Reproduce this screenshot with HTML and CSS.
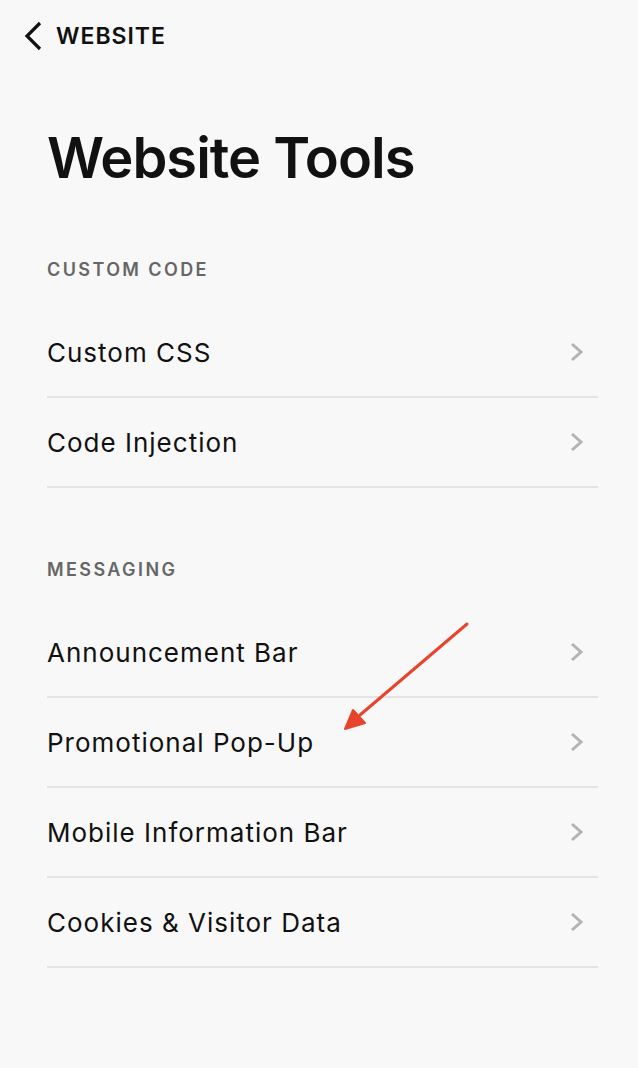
FILE: index.html
```html
<!DOCTYPE html>
<html lang="en">
<head>
<meta charset="utf-8">
<title>Website Tools</title>
<link rel="stylesheet" href="styles.css">
</head>
<body>
<div class="page">
  <nav class="topbar">
    <svg class="back-icon" width="20" height="30" viewBox="0 0 20 30" aria-hidden="true">
      <path d="M17 2 L4 15 L17 28" fill="none" stroke="#111" stroke-width="3.2" stroke-linecap="butt" stroke-linejoin="miter"/>
    </svg>
    <span class="back-label">WEBSITE</span>
  </nav>

  <main class="content">
    <h1 class="title">Website Tools</h1>

    <section class="group">
      <h2 class="group-label">CUSTOM CODE</h2>
      <ul class="list">
        <li class="row"><span>Custom CSS</span><svg class="chev" viewBox="0 0 14 20"><path d="M2 2 L11 10 L2 18"/></svg></li>
        <li class="row"><span>Code Injection</span><svg class="chev" viewBox="0 0 14 20"><path d="M2 2 L11 10 L2 18"/></svg></li>
      </ul>
    </section>

    <section class="group">
      <h2 class="group-label">MESSAGING</h2>
      <ul class="list">
        <li class="row"><span>Announcement Bar</span><svg class="chev" viewBox="0 0 14 20"><path d="M2 2 L11 10 L2 18"/></svg></li>
        <li class="row"><span>Promotional Pop-Up</span><svg class="chev" viewBox="0 0 14 20"><path d="M2 2 L11 10 L2 18"/></svg></li>
        <li class="row"><span>Mobile Information Bar</span><svg class="chev" viewBox="0 0 14 20"><path d="M2 2 L11 10 L2 18"/></svg></li>
        <li class="row"><span>Cookies &amp; Visitor Data</span><svg class="chev" viewBox="0 0 14 20"><path d="M2 2 L11 10 L2 18"/></svg></li>
      </ul>
    </section>
  </main>

  <svg class="annotation" width="140" height="120" viewBox="0 0 140 120" aria-hidden="true">
    <line x1="127" y1="12" x2="20" y2="103" stroke="#e8432d" stroke-width="3" stroke-linecap="round"/>
    <polygon points="5,117 13,98 25,111" fill="#e8432d" stroke="#e8432d" stroke-width="2" stroke-linejoin="round"/>
  </svg>
</div>
</body>
</html>
```

FILE: styles.css
```css
* { box-sizing: border-box; }

html, body {
  margin: 0;
  padding: 0;
  background: #f8f8f8;
}

body {
  font-family: Inter, "Noto Sans", "Liberation Sans", sans-serif;
  color: #111111;
}

.page {
  position: relative;
  width: 638px;
  min-height: 1068px;
}

.topbar {
  display: flex;
  align-items: center;
  gap: 13px;
  padding: 21px 0 0 23px;
  height: 51px;
}

.back-icon {
  display: block;
  width: 20px;
  height: 30px;
}

.back-label {
  font-size: 23px;
  font-weight: 600;
  letter-spacing: 1px;
  line-height: 30px;
}

.content {
  padding: 0 40px 0 47px;
}

.title {
  margin: 72px 0 0 0;
  font-size: 56px;
  font-weight: 600;
  letter-spacing: -1px;
  line-height: 70px;
  color: #111111;
}

.group-label {
  margin: 0;
  font-size: 18px;
  font-weight: 600;
  letter-spacing: 2.4px;
  color: #666666;
  line-height: 24px;
}

.group:first-of-type .group-label {
  margin-top: 65px;
}

.group + .group .group-label {
  margin-top: 70px;
}

.list {
  list-style: none;
  margin: 26px 0 0 0;
  padding: 0;
}

.row {
  display: flex;
  align-items: center;
  justify-content: space-between;
  height: 90px;
  border-bottom: 2px solid #e4e4e4;
  font-size: 26px;
  font-weight: 400;
  letter-spacing: 1px;
  color: #111111;
  padding-right: 14px;
}

.chev {
  width: 14px;
  height: 20px;
  fill: none;
  stroke: #b3b3b3;
  stroke-width: 3;
}

.annotation {
  position: absolute;
  left: 340px;
  top: 612px;
}
```
